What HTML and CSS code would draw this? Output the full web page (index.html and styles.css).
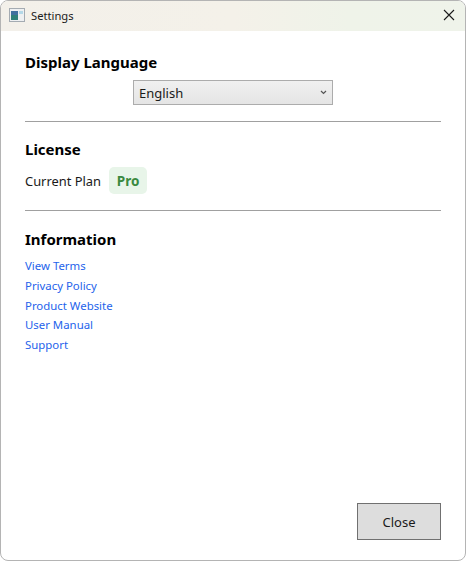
FILE: index.html
```html
<!DOCTYPE html>
<html>
    <head>
        <meta charset="utf-8">
        <title>Settings</title>
        <link rel="stylesheet" href="styles.css">
    </head>
    <body>
        <div class="window">
            <div class="titlebar">
                <svg class="app-icon" width="16" height="14" viewBox="0 0 16 14">
                    <rect x="0.5" y="0.5" width="15" height="13" fill="#eef0f2" stroke="#a4abb2"/>
                    <rect x="2" y="3" width="7" height="9" fill="#2f8078"/>
                    <rect x="2" y="3" width="7" height="4" fill="#40709f"/>
                    <rect x="10" y="3" width="4" height="3" fill="#b4d8e8"/>
                </svg>
                <span class="title">Settings</span>
                <svg class="close-x" width="12" height="12" viewBox="0 0 12 12">
                    <path d="M1 1 L11 11 M11 1 L1 11" stroke="#1a1a1a" stroke-width="1.1" fill="none"/>
                </svg>
            </div>
            <div class="content">
                <h2 class="first">Display Language</h2>
                <div class="select-row">
                    <div class="select">
                        <span>English</span>
                        <svg width="7" height="5" viewBox="0 0 7 5">
                            <path d="M1 1 L3.5 3.5 L6 1" stroke="#555" stroke-width="1.2" fill="none"/>
                        </svg>
                    </div>
                </div>
                <hr class="rule-one">
                <h2>License</h2>
                <div class="plan">
                    <span>Current Plan</span>
                    <span class="badge">Pro</span>
                </div>
                <hr class="rule-two">
                <h2>Information</h2>
                <div class="links">
                    <a href="#">View Terms</a>
                    <a href="#">Privacy Policy</a>
                    <a href="#">Product Website</a>
                    <a href="#">User Manual</a>
                    <a href="#">Support</a>
                </div>
                <div class="footer">
                    <button class="close-btn">Close</button>
                </div>
            </div>
        </div>
    </body>
</html>
```

FILE: styles.css
```css
html, body {
    margin: 0;
    padding: 0;
    height: 100%;
    background: #fff;
}

body {
    font-family: "Noto Sans", "Open Sans", sans-serif;
    color: #1a1a1a;
}

.window {
    box-sizing: border-box;
    width: 466px;
    height: 561px;
    border: 1px solid #b4b4b4;
    border-radius: 8px;
    overflow: hidden;
    display: flex;
    flex-direction: column;
    background: #fff;
}

.titlebar {
    box-sizing: border-box;
    height: 30px;
    flex: none;
    display: flex;
    align-items: center;
    padding: 0 10px 2px 8px;
    background: linear-gradient(90deg, #f3f0ea 0%, #f4f1e9 50%, #eff3e9 75%, #eff3ea 100%);
}

.app-icon {
    margin-right: 6px;
}

.title {
    font-size: 11.2px;
    flex: 1;
}

.content {
    flex: 1;
    display: flex;
    flex-direction: column;
    padding: 0 24px 20px;
}

h2 {
    margin: 0;
    font-size: 15px;
    line-height: 22px;
    font-weight: 700;
    color: #000;
}

h2.first {
    margin-top: 20px;
}

hr {
    width: 100%;
    margin: 0;
    border: 0;
    border-top: 1px solid #a0a0a0;
}

.select-row {
    display: flex;
    justify-content: center;
    margin-top: 7px;
}

.select {
    box-sizing: border-box;
    width: 200px;
    height: 25px;
    display: flex;
    align-items: center;
    justify-content: space-between;
    padding: 0 5px;
    border: 1px solid #acacac;
    background: linear-gradient(#f0f0f0, #e5e5e5);
    font-size: 13px;
}

.rule-one {
    margin-top: 16px;
    margin-bottom: 16px;
}

.plan {
    display: flex;
    align-items: center;
    gap: 8px;
    font-size: 12.9px;
    margin-top: 7px;
}

.badge {
    box-sizing: border-box;
    width: 38px;
    height: 27px;
    display: flex;
    align-items: center;
    justify-content: center;
    border-radius: 5px;
    background: #e8f5e9;
    color: #3a8a3f;
    font-size: 13.5px;
    font-weight: 700;
}

.rule-two {
    margin-top: 16px;
    margin-bottom: 17px;
}

.links {
    display: flex;
    flex-direction: column;
    margin-top: 6px;
    font-size: 11.4px;
    line-height: 19.75px;
}

.links a {
    color: #2563eb;
    text-decoration: none;
}

.footer {
    margin-top: auto;
    display: flex;
    justify-content: flex-end;
}

.close-btn {
    width: 84px;
    height: 37px;
    border: 1px solid #707070;
    background: #dddddd;
    color: #1a1a1a;
    font-family: inherit;
    font-size: 13px;
    padding: 0;
}
```
